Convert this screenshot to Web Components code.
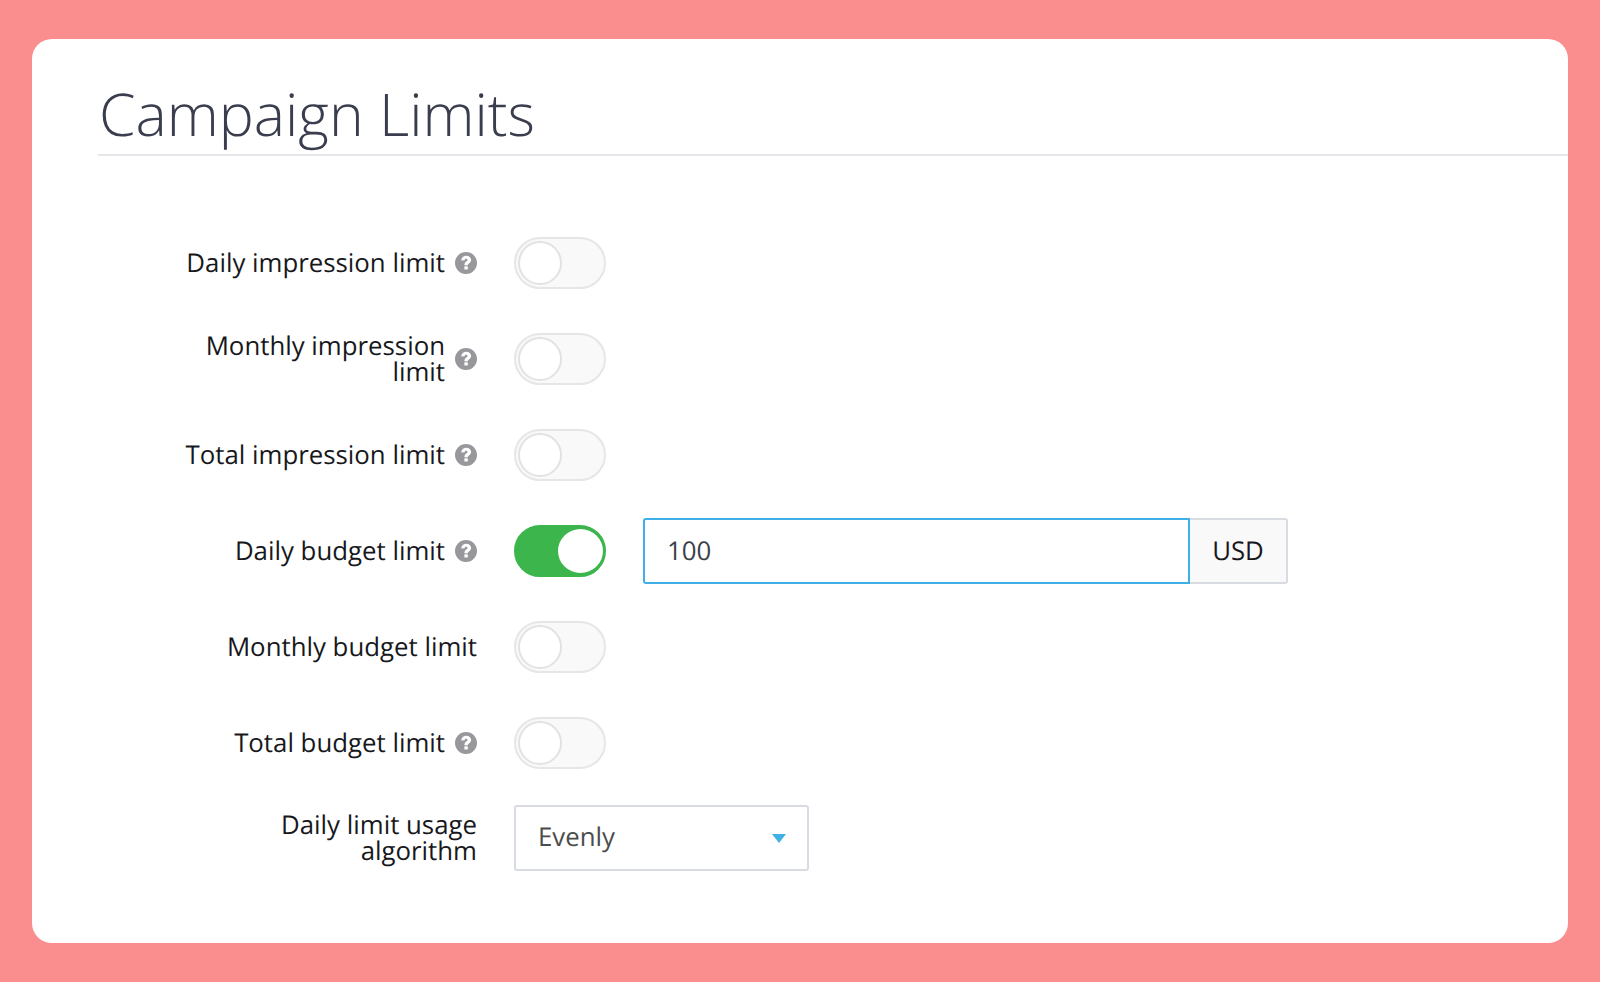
<!DOCTYPE html>
<html><head><meta charset="utf-8"><style>
html,body{margin:0;height:100%}
body{background:#fa8e8e;font-family:"Open Sans",sans-serif;color:#17181c}
</style></head><body>
<limits-card>
<limit-row label="Daily impression limit" help></limit-row>
<limit-row label="Monthly impression<br>limit" help></limit-row>
<limit-row label="Total impression limit" help></limit-row>
<limit-row label="Daily budget limit" help on value="100"></limit-row>
<limit-row label="Monthly budget limit"></limit-row>
<limit-row label="Total budget limit" help></limit-row>
<limit-row label="Daily limit usage<br>algorithm" select="Evenly"></limit-row>
</limits-card>
<script>
class LimitsCard extends HTMLElement{constructor(){super();this.attachShadow({mode:'open'}).innerHTML=`<style>
:host{display:block;box-sizing:border-box;height:982px;padding:39px 32px}
.card{background:#fff;border-radius:20px;height:904px;box-sizing:border-box;padding-top:37px;padding-left:66px}
h1{margin:0;font:300 58.9px/76px "Open Sans",sans-serif;color:#3a3d4d;border-bottom:2px solid #e6e7ea;height:80px;box-sizing:border-box;padding-left:1px;text-rendering:geometricPrecision}
.rows{padding-top:81px;margin-left:-66px;display:flex;flex-direction:column}
</style><div class="card"><h1>Campaign Limits</h1><div class="rows"><slot></slot></div></div>`}}
class ToggleSwitch extends HTMLElement{constructor(){super();this.attachShadow({mode:'open'}).innerHTML=`<style>
:host{display:block;width:92px;height:52px;box-sizing:border-box;border-radius:26px;border:2px solid #e6e6e6;background:#f9f9f9;padding:2px;flex:none}
:host([on]){background:#3cb54d;border-color:#3cb54d}
.k{width:44px;height:44px;box-sizing:border-box;border-radius:50%;background:#fff;border:2px solid #e2e2e2}
:host([on]) .k{border:0;width:45px;margin-left:40px}
</style><div class="k"></div>`}}
class HelpIcon extends HTMLElement{constructor(){super();this.attachShadow({mode:'open'}).innerHTML=`<style>:host{display:block;width:22px;height:22px;flex:none}svg{display:block}</style>
<svg width="22" height="22" viewBox="0 0 22 22"><circle cx="11" cy="11" r="11" fill="#97979c"/><path d="M6.200 8.400C6.500 5.400 8.500 3.700 11.200 3.700c2.900 0 4.900 1.700 4.900 4.100 0 1.800-1 2.800-2.200 3.600-.9.600-1.100 1-1.100 1.900H9.400c0-2 .5-3 1.900-3.900.9-.6 1.200-.9 1.200-1.500 0-.7-.5-1.100-1.300-1.100-.9 0-1.400.5-1.500 1.400z" fill="#fff"/><rect x="9.400" y="14.300" width="3.400" height="3.300" rx=".4" fill="#fff"/></svg>`}}
class LimitRow extends HTMLElement{constructor(){super();const a=n=>this.getAttribute(n),h=n=>this.hasAttribute(n);
let ctl='';if(h('select'))ctl=`<div class="sel"><span>${a('select')}</span><svg width="14" height="9" viewBox="0 0 14 9"><path d="M0 0h14L7 9z" fill="#3fb0e6"/></svg></div>`;
else{ctl=`<toggle-switch ${h('on')?'on':''}></toggle-switch>`;if(a('value'))ctl+=`<div class="grp"><div class="inp">${a('value')}</div><div class="add">USD</div></div>`}
this.attachShadow({mode:'open'}).innerHTML=`<style>
:host{display:flex;align-items:center;height:${h('select')?'66px':'52px'};margin-bottom:${h('select')?'0':'44px'};margin-top:${h('select')?'-8px':'0'};font-size:25.8px;text-rendering:geometricPrecision}
.lab{box-sizing:border-box;width:443px;margin-right:37px;margin-left:2px;display:flex;justify-content:flex-end;align-items:center;gap:10px;line-height:26px;text-align:right}
.lab span{margin-top:-2px}
.grp{display:flex;margin-left:37px;height:66px}
.inp{width:547px;box-sizing:border-box;border:2px solid #3fb0e6;border-radius:3px 0 0 3px;line-height:60px;padding-left:22px;color:#3c3f4a}
.add{width:98px;box-sizing:border-box;border:2px solid #d8dbe2;border-left:0;border-radius:0 3px 3px 0;background:#f9f9fa;line-height:60px;text-align:center}
.sel{width:295px;height:66px;box-sizing:border-box;border:2px solid #d8dbe2;border-radius:3px;display:flex;align-items:center;justify-content:space-between;padding:0 21px 0 22px;color:#4c4c4c}
.sel span{margin-top:-4px}
</style><div class="lab"><span>${a('label')}</span>${h('help')?'<help-icon></help-icon>':''}</div>${ctl}`}}
customElements.define('help-icon',HelpIcon);customElements.define('toggle-switch',ToggleSwitch);customElements.define('limit-row',LimitRow);customElements.define('limits-card',LimitsCard);
</script></body></html>
